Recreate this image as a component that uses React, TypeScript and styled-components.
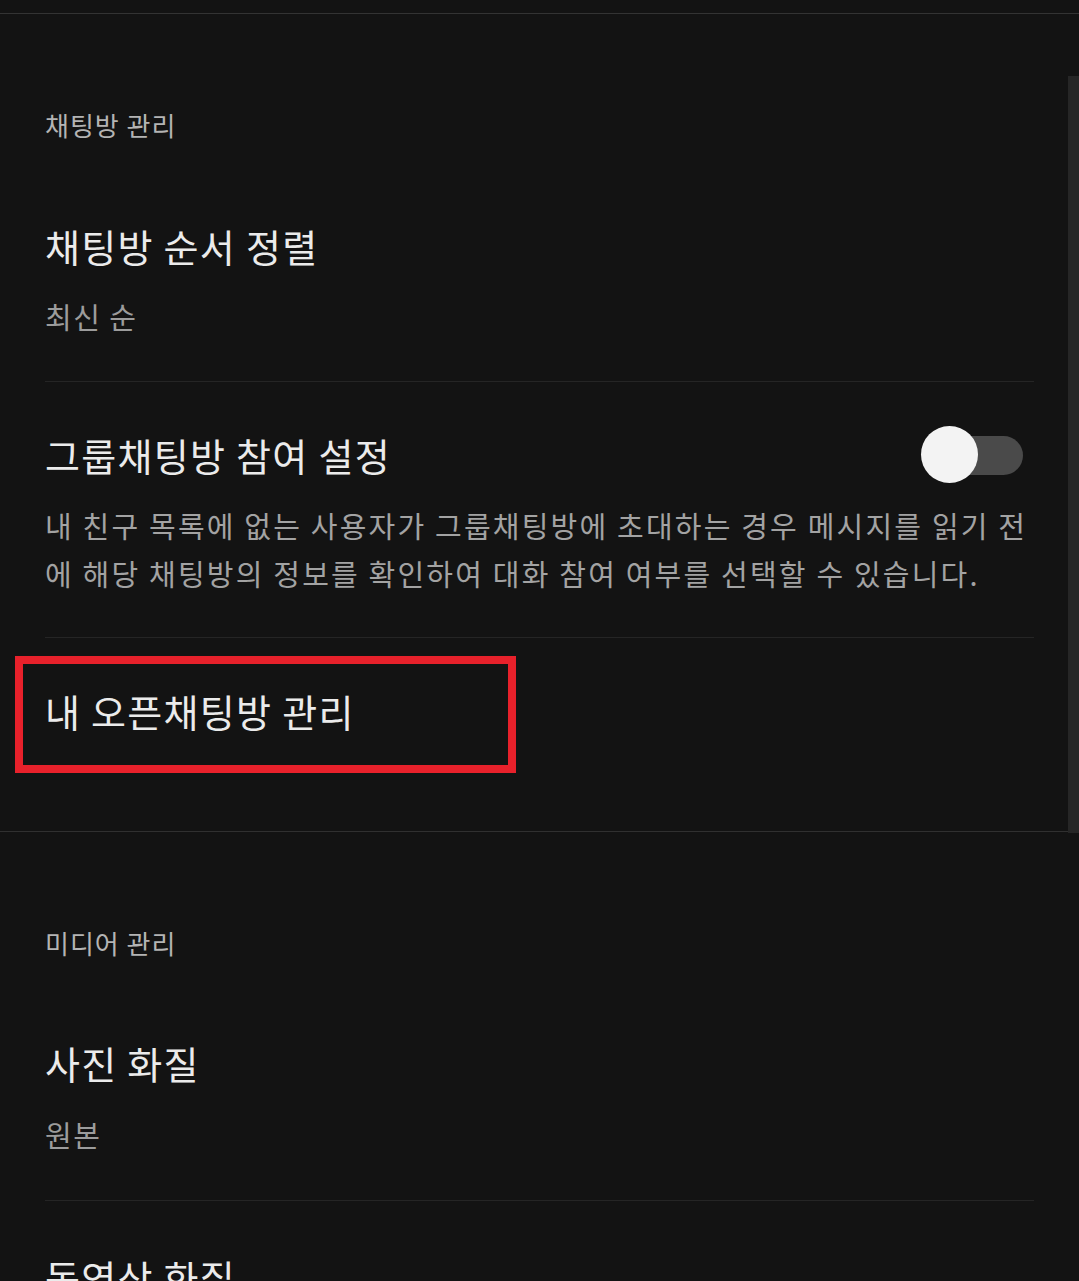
import React from "react";
import styled, { createGlobalStyle } from "styled-components";

const Global = createGlobalStyle`
  html, body { margin: 0; padding: 0; background: #131313; }
  body { font-family: "Noto Sans CJK KR", "Noto Sans", sans-serif; }
`;

const Page = styled.div`
  position: relative;
  width: 1079px;
  height: 1281px;
  overflow: hidden;
  background: #131313;
`;

const TopBar = styled.div`
  height: 13px;
  border-bottom: 1px solid #333333;
`;

const Section = styled.section<{ $divider?: boolean }>`
  display: flex;
  flex-direction: column;
  border-bottom: ${(p) => (p.$divider ? "1px solid #303030" : "none")};
`;

const SectionLabel = styled.div`
  padding: 93px 45px 0;
  font-size: 26px;
  line-height: 36px;
  letter-spacing: 1px;
  color: #b4b4b4;
`;

const Item = styled.div<{ $pt?: number }>`
  position: relative;
  padding: ${(p) => p.$pt ?? 48}px 45px 0;
  display: flex;
  flex-direction: column;
`;

const ItemInner = styled.div<{ $pb: number; $divider?: boolean }>`
  padding-bottom: ${(p) => p.$pb}px;
  border-bottom: ${(p) => (p.$divider ? "1px solid #252525" : "none")};
  display: flex;
  flex-direction: column;
`;

const TitleRow = styled.div`
  display: flex;
  align-items: center;
  justify-content: space-between;
  height: 50px;
`;

const Title = styled.div`
  font-size: 38px;
  line-height: 50px;
  color: #ebebeb;
  letter-spacing: 1.3px;
`;

const Sub = styled.div<{ $mt: number }>`
  margin-top: ${(p) => p.$mt}px;
  font-size: 29px;
  line-height: 40px;
  letter-spacing: 1.5px;
  color: #9c9c9c;
`;

const Desc = styled.div`
  margin-top: 21px;
  font-size: 29px;
  line-height: 48px;
  letter-spacing: 2.2px;
  color: #a3a3a3;
  word-break: normal;
  line-break: anywhere;
`;

const Toggle = styled.div`
  position: relative;
  width: 102px;
  height: 50px;
  margin-right: 11px;
  display: flex;
  align-items: center;
  justify-content: flex-end;
`;

const Track = styled.div`
  width: 80px;
  height: 39px;
  border-radius: 20px;
  background: #4a4a4a;
`;

const Knob = styled.div`
  position: absolute;
  left: 0;
  top: -4px;
  width: 57px;
  height: 57px;
  border-radius: 50%;
  background: #f3f3f3;
`;

const Highlight = styled.div`
  position: absolute;
  left: 15px;
  top: 18px;
  width: 501px;
  height: 117px;
  box-sizing: border-box;
  border: 8px solid #e8212b;
  pointer-events: none;
`;

const Scrollbar = styled.div`
  position: absolute;
  right: 0;
  top: 76px;
  width: 11px;
  height: 757px;
  background: #262626;
`;

export default function App() {
  return (
    <>
      <Global />
      <Page>
        <TopBar />
        <Section $divider>
          <SectionLabel>채팅방 관리</SectionLabel>
          <Item $pt={78}>
            <ItemInner $pb={45} $divider>
              <Title>채팅방 순서 정렬</Title>
              <Sub $mt={25}>최신 순</Sub>
            </ItemInner>
          </Item>
          <Item $pt={48}>
            <ItemInner $pb={40} $divider>
              <TitleRow>
                <Title>그룹채팅방 참여 설정</Title>
                <Toggle>
                  <Track />
                  <Knob />
                </Toggle>
              </TitleRow>
              <Desc>
                내 친구 목록에 없는 사용자가 그룹채팅방에 초대하는 경우 메시지를 읽기 전에 해당 채팅방의 정보를 확인하여 대화 참여 여부를 선택할 수 있습니다.
              </Desc>
            </ItemInner>
          </Item>
          <Item $pt={48}>
            <ItemInner $pb={95}>
              <Title>내 오픈채팅방 관리</Title>
            </ItemInner>
            <Highlight />
          </Item>
        </Section>
        <Section>
          <SectionLabel>미디어 관리</SectionLabel>
          <Item $pt={77}>
            <ItemInner $pb={46} $divider>
              <Title>사진 화질</Title>
              <Sub $mt={26}>원본</Sub>
            </ItemInner>
          </Item>
          <Item $pt={51}>
            <ItemInner $pb={45}>
              <Title>동영상 화질</Title>
            </ItemInner>
          </Item>
        </Section>
        <Scrollbar />
      </Page>
    </>
  );
}
